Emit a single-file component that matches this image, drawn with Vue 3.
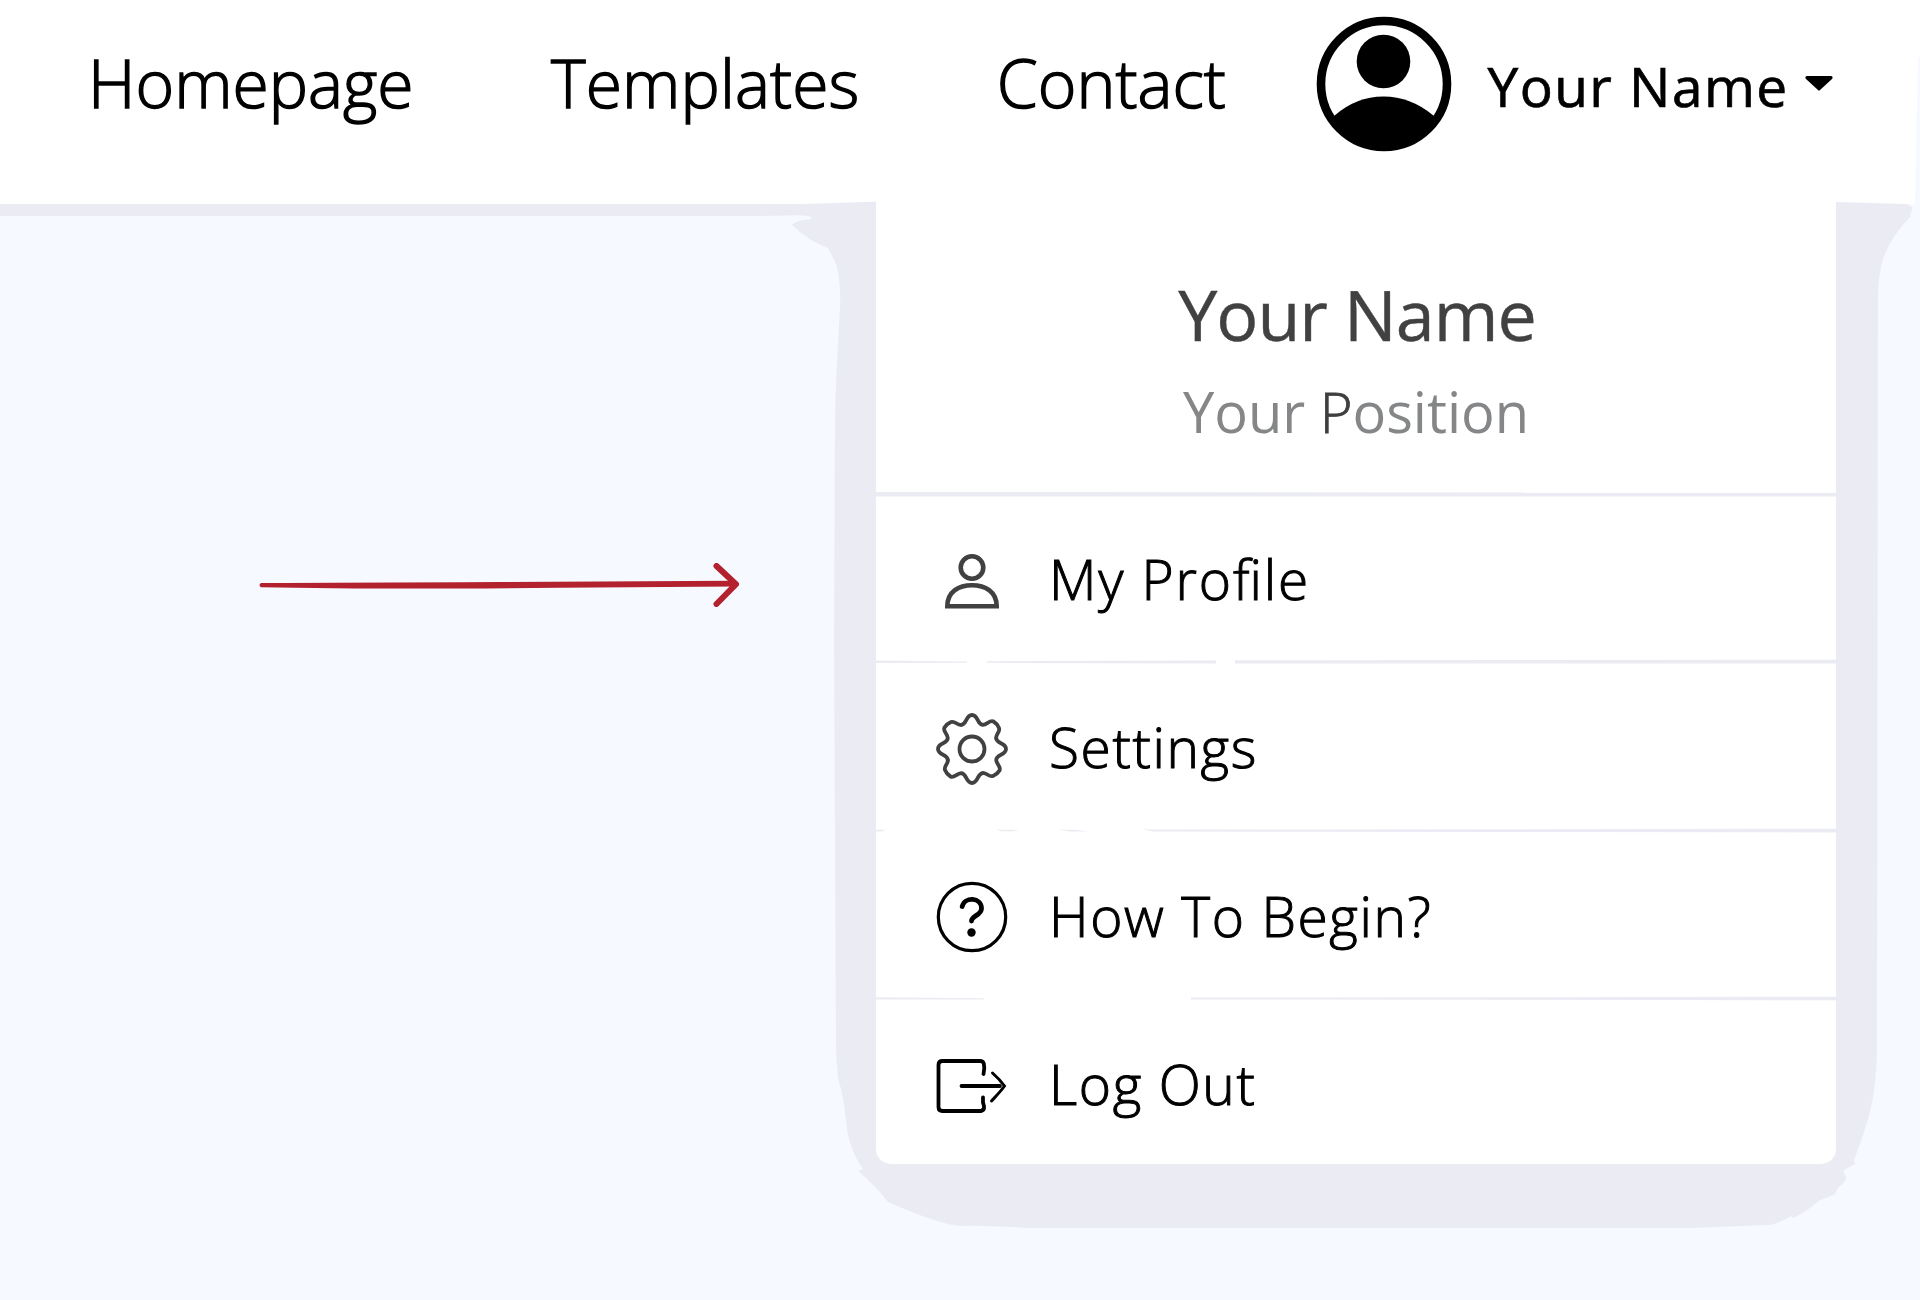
<script setup>
const links = [
  { label: 'Homepage' },
  { label: 'Templates', tracked: true },
  { label: 'Contact' },
]

const entries = [
  { id: 'profile', label: 'My Profile', rule: ['0,0 960,.6 960,4.400 0,4.400'] },
  {
    id: 'settings',
    label: 'Settings',
    rule: ['0,.6 91,1.4 91,2.8 0,3', '111,1.2 340,.4 340,3.6 111,2.8', '359,.2 960,-.2 960,3.4 359,3.4'],
  },
  {
    id: 'help',
    label: 'How To Begin?',
    rule: ['0,.8 10,.8 6,2.4 0,2.4', '120,.8 143,.8 137,2.2 126,2.2', '183,.8 200,.8 211,2.4 194,2.4', '266,.6 960,-.2 960,3.4 278,2.6'],
  },
  { id: 'logout', label: 'Log Out', rule: ['0,.2 108,1.2 108,2.4 0,2.4', '315,.6 960,-.2 960,3.2 315,2.4'] },
]

const gearTurns = [0, 90, 180, 270]
</script>

<template>
  <div class="page">
    <svg class="backdrop" viewBox="0 0 1920 1300" aria-hidden="true">
      <path
        class="shade"
        d="M0 204H800L836 203L877 201.500V300H1836V202L1906 204Q1913 206 1914 211Q1914 214 1910 217Q1890 238 1883 259Q1878 276 1878 300L1877 1040Q1877 1082 1871 1107Q1867 1126 1854 1160L1855 1164L1844 1170Q1843 1173 1846 1177Q1846 1182 1838 1188L1835 1194Q1830 1197 1820 1200Q1805 1213 1793 1218L1792 1216Q1775 1225 1768 1225L1690 1228H1030Q980 1225 962 1226Q940 1225 888 1202Q875 1185 858 1171L863 1169Q848 1148 846 1120Q844 1098 838 1078Q836 1060 836 1040L834 640L835 420Q836 370 840 308Q841 280 836 264Q830 251 828 248Q810 242 792 225Q796 220 811 219.500Q814 215 795 215.200L760 216H0Z"
      />
      <path class="edge" d="M1918 57H1920V216H1910L1914 204H1915Z" />
    </svg>

    <header class="bar">
      <nav class="links">
        <a v-for="link in links" :key="link.label" class="link" :class="{ tracked: link.tracked }">{{ link.label }}</a>
      </nav>
      <div class="account">
        <svg class="avatar" viewBox="0 0 136 136" aria-hidden="true">
          <circle cx="68" cy="68" r="63" fill="none" stroke="#000" stroke-width="8.600" />
          <circle cx="67.500" cy="45.500" r="26.800" />
          <path d="M18 100Q40 80.500 67.500 80.500T118 100Q101 132 68 132T18 100Z" />
        </svg>
        <span class="account-name">Your Name</span>
        <svg class="caret" viewBox="0 0 28 15" aria-hidden="true">
          <path d="M1.500 0H26.500Q28.500 1 27 3L15 14Q14 15 13 14L1 3Q-.5 1 1.500 0Z" />
        </svg>
      </div>
    </header>

    <main class="stage">
      <svg class="pointer" viewBox="0 0 482 44" aria-hidden="true">
        <path class="shaft" d="M2 20Q90 19.500 240 19L476 17.800V23.500L300 24.800Q120 26.500 2 24.200Q-1 22.300 2 20Z" />
        <path class="tip" d="M457.500 3L477 21.200L457.500 41" />
      </svg>

      <section class="menu">
        <div class="who">
          <h1 class="who-name">Your Name</h1>
          <p class="who-role">Your <span class="initial">P</span>osition</p>
        </div>

        <div v-for="entry in entries" :key="entry.id" class="entry" :class="entry.id">
          <svg class="rule" viewBox="0 0 960 5" aria-hidden="true">
            <polygon v-for="part in entry.rule" :key="part" :points="part" />
          </svg>
          <a class="row">
            <svg v-if="entry.id === 'profile'" class="icon soft" viewBox="-36 -36 72 72">
              <circle cx="0" cy="-13.500" r="11.300" stroke-width="4.600" />
              <path stroke-width="4.600" d="M-24.700 25.200C-24.500 10.500 -13 4.200 0 4.200S24.500 10.500 24.700 25.200Z" />
            </svg>
            <svg v-else-if="entry.id === 'settings'" class="icon soft" viewBox="-36 -36 72 72">
              <circle r="12.500" stroke-width="3.800" />
              <path
                v-for="turn in gearTurns"
                :key="turn"
                stroke-width="3.800"
                :transform="`rotate(${turn})`"
                d="M-11 -24.200C-5 -24.200 -6.500 -34 0 -34S5 -24.200 11 -24.200C15 -24.400 18 -29.500 21.500 -27.500C24 -26 26 -23.500 27 -21C28.500 -17 23.700 -15 24.200 -11"
              />
            </svg>
            <svg v-else-if="entry.id === 'help'" class="icon" viewBox="-36 -36 72 72">
              <circle r="33.700" stroke-width="3.200" />
              <path stroke-width="4.800" d="M-9.800 -10.500C-7.500 -20.500 9.500 -20 9.500 -8.500C9.500 -1.500 -.5 -1.500 -.5 4" />
              <circle class="dot" cx="-.5" cy="15.500" r="4.200" />
            </svg>
            <svg v-else class="icon" viewBox="-36 -36 72 72">
              <path stroke-width="3.800" d="M11.500 -12Q13 -18 11.800 -22.500Q11 -25 8 -25H-29.500Q-33.500 -25 -33.500 -21V21Q-33.500 25 -29.500 25H9Q12.500 24.500 12 20Q10.500 17 11 11.500" />
              <path stroke-width="3.800" d="M-10.500 0H28" />
              <path stroke-width="3" d="M20.500 -13C25 -9 30 -3.500 32.500 0C29 5 25.500 8.500 19.500 15" />
            </svg>
            <span class="label">{{ entry.label }}</span>
          </a>
        </div>
      </section>
    </main>
  </div>
</template>

<style>
body {
  margin: 0;
}
</style>

<style scoped>
.page {
  position: relative;
  display: flex;
  flex-direction: column;
  width: 1920px;
  height: 1300px;
  overflow: hidden;
  background: linear-gradient(#fff 204px, #f6f9ff 204px);
  color: #000;
  font-family: "Open Sans", "Noto Sans", sans-serif;
}
.backdrop {
  position: absolute;
  inset: 0;
  width: 1920px;
  height: 1300px;
}
.shade {
  fill: #ebebf4;
}
.edge {
  fill: #f6f9ff;
}
.bar {
  position: relative;
  display: flex;
  align-items: flex-start;
  box-sizing: border-box;
  height: 202px;
  padding-left: 88px;
}
.links {
  display: flex;
  gap: 137.500px;
  height: 164px;
  line-height: 164px;
}
.link {
  font-size: 66px;
  font-weight: 300;
  white-space: nowrap;
  -webkit-text-stroke: 1.400px #000;
}
.tracked {
  letter-spacing: 0.100px;
}
.account {
  display: flex;
  align-items: center;
  height: 167px;
  margin-left: 90px;
}
.avatar {
  width: 136px;
  height: 136px;
}
.account-name {
  margin: 4px 0 0 35.500px;
  font-size: 55px;
  line-height: 80px;
  letter-spacing: 1.450px;
  white-space: nowrap;
  -webkit-text-stroke: 0.700px #000;
}
.caret {
  width: 28px;
  height: 15px;
  margin-left: 16.500px;
}
.stage {
  position: relative;
  display: flex;
  align-items: flex-start;
}
.pointer {
  flex: none;
  width: 482px;
  height: 44px;
  margin: 360.500px 135px 0 259px;
}
.shaft {
  fill: #b3202e;
}
.tip {
  fill: none;
  stroke: #b3202e;
  stroke-width: 6;
  stroke-linecap: round;
  stroke-linejoin: round;
}
.menu {
  width: 960px;
  height: 962px;
  margin-top: -1px;
  padding-top: 1px;
  border-radius: 0 0 15px 15px;
  background: #fff;
}
.who {
  box-sizing: border-box;
  height: 290px;
  padding-top: 64px;
  text-align: center;
}
.who-name {
  margin: 0 0 8.500px 2px;
  color: #414141;
  font-size: 70px;
  font-weight: 400;
  line-height: 96px;
  letter-spacing: -1px;
  -webkit-text-stroke: 0.400px #414141;
}
.who-role {
  margin: 0;
  color: #858688;
  font-size: 56px;
  line-height: 80px;
}
.initial {
  color: #3f3f40;
  font-weight: 300;
  -webkit-text-stroke: 0.800px #3f3f40;
}
.entry {
  display: flex;
  flex-direction: column;
  height: 168.300px;
}
.rule {
  flex: none;
  width: 960px;
  height: 5px;
  overflow: visible;
  fill: #ebebf4;
}
.row {
  display: flex;
  align-items: center;
  height: 164px;
  padding-left: 60px;
}
.icon {
  width: 72px;
  height: 72px;
  margin-top: 4px;
  overflow: visible;
  fill: none;
  stroke: #000;
  stroke-linecap: round;
}
.soft {
  stroke: #414142;
}
.dot {
  fill: #000;
  stroke: none;
}
.label {
  margin-left: 41px;
  font-size: 55px;
  font-weight: 300;
  letter-spacing: 1.600px;
  font-feature-settings: "liga" 1;
  white-space: nowrap;
  -webkit-text-stroke: 1px #000;
}
.profile .label {
  letter-spacing: 1.850px;
}
</style>
